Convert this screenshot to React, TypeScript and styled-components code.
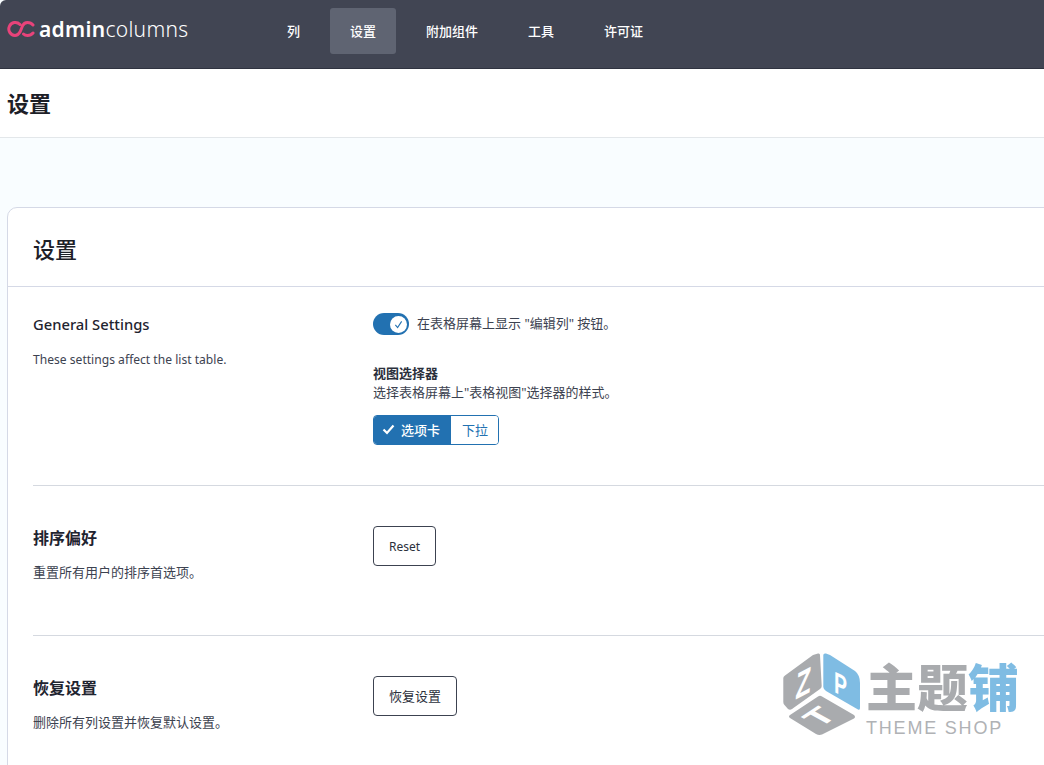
import React from 'react'
import styled, {createGlobalStyle} from 'styled-components'

const GlobalStyle = createGlobalStyle`
  html, body {
    margin: 0;
    padding: 0;
    height: 765px;
    overflow: hidden;
    background: #f9fdff;
    font-family: "Noto Sans", "Noto Sans CJK SC", sans-serif;
    color: #1f2430;
  }
  * { box-sizing: border-box; }
`

const Page = styled.div`
  position: relative;
  width: 1044px;
  height: 765px;
  overflow: hidden;
`

const TopBar = styled.div`
  height: 69px;
  background: #414553;
  border-bottom: 1px solid #2f3340;
  border-top-left-radius: 6px;
  display: flex;
  align-items: flex-start;
  padding-left: 7px;
`

const Brand = styled.div`
  display: flex;
  align-items: center;
  gap: 4px;
  width: 260px;
  height: 58px;
  color: #fff;
  font-size: 21px;
  letter-spacing: 0.3px;
`

const BrandBold = styled.span`
  font-weight: 600;
`

const BrandLight = styled.span`
  font-weight: 300;
`

const Nav = styled.nav`
  display: flex;
  gap: 10px;
  padding-top: 8px;
`

const NavItem = styled.a<{$active?: boolean}>`
  height: 46px;
  padding: 0 20px 2px;
  display: flex;
  align-items: center;
  border-radius: 3px;
  color: #fff;
  font-size: 13px;
  font-weight: 500;
  background: ${(p) => (p.$active ? '#5f6472' : 'transparent')};
`

const TitleBar = styled.div`
  height: 69px;
  background: #fff;
  border-bottom: 1px solid #e3e7ea;
  display: flex;
  align-items: center;
  padding: 0 0 2px 7px;
`

const PageTitle = styled.h1`
  margin: 0;
  font-size: 22px;
  font-weight: 700;
  color: #1d2027;
`

const Content = styled.div`
  padding: 69px 0 0 7px;
`

const Card = styled.div`
  width: 1060px;
  background: #fff;
  border: 1px solid #d5d9e6;
  border-radius: 10px;
`

const CardHead = styled.div`
  height: 79px;
  display: flex;
  align-items: center;
  padding: 1px 0 0 25px;
  border-bottom: 1px solid #d5d9e6;
`

const CardTitle = styled.h2`
  margin: 0;
  font-size: 22px;
  font-weight: 500;
  color: #1d2027;
`

const CardBody = styled.div`
  padding-left: 25px;
`

const Section = styled.div<{$height: number}>`
  display: flex;
  height: ${(p) => p.$height}px;
  padding-top: ${(p) => (p.$height > 160 ? 26 : 40)}px;
  border-bottom: 1px solid #d5d9e0;

  &:last-child {
    border-bottom: 0;
  }
`

const Side = styled.div`
  width: 340px;
`

const SideTitle = styled.h3<{$latin?: boolean}>`
  margin: 0 0 ${(p) => (p.$latin ? 15 : 13)}px;
  font-size: ${(p) => (p.$latin ? '14.75px' : '16px')};
  line-height: ${(p) => (p.$latin ? 22 : 24)}px;
  font-weight: ${(p) => (p.$latin ? 500 : 600)};
  color: #1f2430;
`

const SideText = styled.p<{$latin?: boolean}>`
  margin: 0;
  font-size: ${(p) => (p.$latin ? '12.1px' : '13px')};
  line-height: ${(p) => (p.$latin ? 20 : 19)}px;
  color: #3c4250;
`

const Main = styled.div`
  display: flex;
  flex-direction: column;
  align-items: flex-start;
`

const ToggleRow = styled.div`
  display: flex;
  align-items: center;
  gap: 8px;
  height: 22px;
  font-size: 13px;
  color: #3c4250;
`

const ToggleLabel = styled.span`
  padding-bottom: 4px;
`

const Toggle = styled.div`
  width: 36px;
  height: 22px;
  border-radius: 11px;
  background: #2271b1;
  display: flex;
  align-items: center;
  justify-content: flex-end;
  padding-right: 2px;
`

const Knob = styled.div`
  width: 17px;
  height: 17px;
  border-radius: 50%;
  background: #fff;
  color: #2271b1;
  display: flex;
  align-items: center;
  justify-content: center;
`

const FieldLabel = styled.div`
  margin-top: 29px;
  font-size: 13px;
  line-height: 18px;
  font-weight: 700;
  color: #2b303c;
`

const FieldHelp = styled.div`
  font-size: 13px;
  line-height: 20px;
  color: #3c4250;
`

const Segmented = styled.div`
  display: flex;
  margin-top: 13px;
  height: 30px;
  border: 1px solid #2271b1;
  border-radius: 4px;
  overflow: hidden;
  font-size: 13px;
`

const Segment = styled.div<{$on?: boolean}>`
  display: flex;
  align-items: center;
  gap: 6px;
  padding: ${(p) => (p.$on ? '0 0 2px 8px' : '0 10px 2px 11px')};
  width: ${(p) => (p.$on ? '77px' : 'auto')};
  background: ${(p) => (p.$on ? '#2271b1' : '#fff')};
  color: ${(p) => (p.$on ? '#fff' : '#2271b1')};
  font-weight: ${(p) => (p.$on ? 500 : 400)};
`

const OutlineButton = styled.button<{$cjk?: boolean}>`
  height: 40px;
  padding: ${(p) => (p.$cjk ? '0 15px 2px' : '0 15px')};
  background: #fff;
  border: 1px solid #3c4250;
  border-radius: 4px;
  font-family: inherit;
  font-size: ${(p) => (p.$cjk ? '13px' : '12px')};
  color: #2b303c;
`

const Watermark = styled.div`
  position: absolute;
  left: 782px;
  top: 652px;
  display: flex;
  align-items: flex-start;
  gap: 6px;
  pointer-events: none;
`

const MarkWords = styled.div`
  display: flex;
  flex-direction: column;
  padding-top: 4px;
`

const MarkCn = styled.div`
  font-size: 51px;
  line-height: 62px;
  font-weight: 900;
  color: #a9abae;
  white-space: nowrap;
`

const MarkBlue = styled.span`
  color: #7fbce3;
`

const MarkEn = styled.div`
  font-family: "Liberation Sans", sans-serif;
  font-size: 18px;
  line-height: 20px;
  letter-spacing: 1.8px;
  color: #b0b2b5;
  white-space: nowrap;
`

const CubeLetter = styled.text`
  font-family: "Liberation Sans", sans-serif;
  font-weight: 700;
  fill: #fff;
`

const LogoMark = () => (
  <svg width="28" height="18" viewBox="0 0 28 18" fill="none">
    <path d="M13 4.5A6.5 6.5 0 1 0 8 15.5Q11 15.5 13 12L15.5 6Q17 2.5 20.5 2.5Q24 2.5 26 5" stroke="#e8437a" strokeWidth="3" strokeLinecap="round" />
    <path d="M26 13Q24 15.5 20.5 15.5Q18 15.5 16.5 14" stroke="#e8437a" strokeWidth="3" strokeLinecap="round" />
  </svg>
)

const CubeMark = () => (
  <svg width="78" height="84" viewBox="0 0 78 84">
    <path d="M36 1.5 Q38 1 38 3 L39.7 34 Q39.7 36 38 37 L10 57 Q8 58.5 6 57 L2.5 53 Q1.3 52 1.3 50 L1.3 26 Q1.3 24.5 3 23.5 L31 3Z" fill="#a9abae" />
    <path d="M41.3 3 Q41.3 1 44 1.5 L48 3 L73 19 Q78 23 78 31 L78 56 Q78 58.5 76 57.5 L44 39 Q41.3 37 41.3 35Z" fill="#7fbce3" />
    <path d="M8 63 L36 44.5 Q38 43 40 44.5 L72 63 Q74 65 72 66.5 L40 82.5 Q37 83.5 34 82 L8 66 Q6 64.5 8 63Z" fill="#a9abae" />
    <CubeLetter fontSize="30" transform="matrix(.83,-.44,-.08,1.25,13,48)">Z</CubeLetter>
    <CubeLetter fontSize="30" transform="matrix(.65,.3,0,1,52,40)">P</CubeLetter>
    <CubeLetter fontSize="24" transform="matrix(1.23,-.82,1.18,.65,38,76)">T</CubeLetter>
  </svg>
)

export default function App() {
  return (
    <Page>
      <GlobalStyle />
      <TopBar>
        <Brand>
          <LogoMark />
          <span>
            <BrandBold>admin</BrandBold>
            <BrandLight>columns</BrandLight>
          </span>
        </Brand>
        <Nav>
          <NavItem>列</NavItem>
          <NavItem $active>设置</NavItem>
          <NavItem>附加组件</NavItem>
          <NavItem>工具</NavItem>
          <NavItem>许可证</NavItem>
        </Nav>
      </TopBar>
      <TitleBar>
        <PageTitle>设置</PageTitle>
      </TitleBar>
      <Content>
        <Card>
          <CardHead>
            <CardTitle>设置</CardTitle>
          </CardHead>
          <CardBody>
            <Section $height={199}>
              <Side>
                <SideTitle $latin>General Settings</SideTitle>
                <SideText $latin>These settings affect the list table.</SideText>
              </Side>
              <Main>
                <ToggleRow>
                  <Toggle>
                    <Knob>
                      <svg width="9" height="9" viewBox="0 0 10 10" fill="none">
                        <path d="M1.5 5.5L4 8.5L8.5 1.5" stroke="currentColor" strokeWidth="1.2" />
                      </svg>
                    </Knob>
                  </Toggle>
                  <ToggleLabel>在表格屏幕上显示 "编辑列" 按钮。</ToggleLabel>
                </ToggleRow>
                <FieldLabel>视图选择器</FieldLabel>
                <FieldHelp>选择表格屏幕上"表格视图"选择器的样式。</FieldHelp>
                <Segmented>
                  <Segment $on>
                    <svg width="13" height="11" viewBox="0 0 13 11" fill="none">
                      <path d="M1.5 5.5L5 9L11.5 1.5" stroke="currentColor" strokeWidth="2.2" />
                    </svg>
                    选项卡
                  </Segment>
                  <Segment>下拉</Segment>
                </Segmented>
              </Main>
            </Section>
            <Section $height={150}>
              <Side>
                <SideTitle>排序偏好</SideTitle>
                <SideText>重置所有用户的排序首选项。</SideText>
              </Side>
              <Main>
                <OutlineButton>Reset</OutlineButton>
              </Main>
            </Section>
            <Section $height={150}>
              <Side>
                <SideTitle>恢复设置</SideTitle>
                <SideText>删除所有列设置并恢复默认设置。</SideText>
              </Side>
              <Main>
                <OutlineButton $cjk>恢复设置</OutlineButton>
              </Main>
            </Section>
          </CardBody>
        </Card>
      </Content>
      <Watermark>
        <CubeMark />
        <MarkWords>
          <MarkCn>
            主题<MarkBlue>铺</MarkBlue>
          </MarkCn>
          <MarkEn>THEME SHOP</MarkEn>
        </MarkWords>
      </Watermark>
    </Page>
  )
}
